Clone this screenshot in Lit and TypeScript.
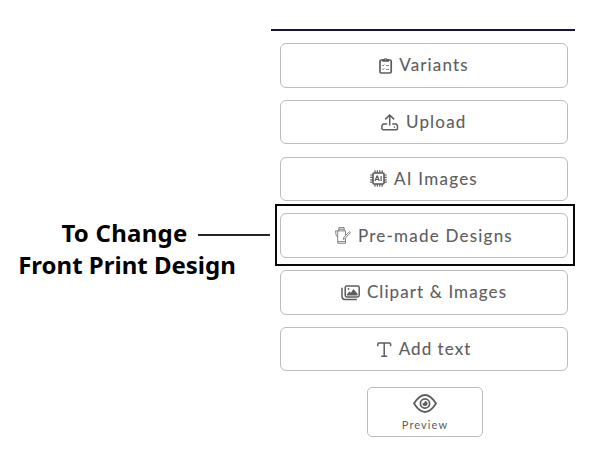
import { LitElement, html, css, svg } from "lit";
import { customElement } from "lit/decorators.js";
import { styleMap } from "lit/directives/style-map.js";

const icons = {
  variants: svg`<rect x="1" y="3" width="11.2" height="13" rx="1.3" fill="none" stroke="currentColor" stroke-width="1.7"/>
    <path d="M3.2 4.8V2.1H5a1.7 1.7 0 0 1 3.2 0H10v2.7z" fill="currentColor"/>
    <circle cx="6.6" cy="2" r=".6" fill="#fff"/>
    <path d="M3.2 8.2l.8.8 1.4-1.6M3.2 12l.8.8 1.4-1.6M7 8.6h3M7 12.4h3" fill="none" stroke="currentColor" stroke-width=".8"/>`,
  upload: svg`<g fill="none" stroke="currentColor" stroke-width="1.5"><path d="M8.7 11.5V1.2M4.3 5.4l4.4-4.4L13.1 5.4"/>
    <path d="M6.2 10H2.4Q.9 10.6.9 12.4v2.2q0 1.2 1.2 1.2h13.2q1.2 0 1.2-1.2v-2.2Q16.5 10.6 15 10H11.2"/></g><circle cx="13.4" cy="13.1" r=".8" fill="currentColor"/>`,
  ai: svg`<rect x="3" y="3" width="11" height="11" rx="1" fill="none" stroke="currentColor" stroke-width="1.6"/>
    <path d="M5 .2v3M7.4 .2v3M9.8 .2v3M12.2 .2v3M5 13.8v3M7.4 13.8v3M9.8 13.8v3M12.2 13.8v3M.2 5h3M.2 7.4h3M.2 9.8h3M.2 12.2h3M13.8 5h3M13.8 7.4h3M13.8 9.8h3M13.8 12.2h3" stroke="currentColor" stroke-width="1.2"/>
    <path d="M5 11l1.9-5h.5l1.9 5M5.8 9.5h2.8M11.1 6v5" fill="none" stroke="currentColor" stroke-width="1.2"/>`,
  designs: svg`<g fill="none" stroke="currentColor" stroke-width=".75"><path d="M.5 3.9h10M2.7 3.9v12.4h7.8v-4.8M10.5 3.9v4.4M3.8 3.9V.6h5.4v3.3M3.8 2.2h5.4M.5 3.9l.7 4.8 1.5 1M2.7 14.6h7.8M8.2 12.4l.6-2L14.4 4.7l1 .9-5.2 5.8z"/></g>`,
  clipart: svg`<g fill="none" stroke="currentColor" stroke-width="1.5"><rect x="4.2" y=".9" width="14" height="11" rx="1.6"/><path d="M1 2.8v8.8q0 2.9 2.7 2.9h12.1"/></g>
    <path d="M5.8 10.4V9.5l2.6-3 1.5 1.3 2.6-3.8 4 4.8v1.6z" fill="currentColor"/><circle cx="7.5" cy="3.9" r=".9" fill="currentColor"/>`,
  text: svg`<path d="M.8 4.2V1.9q0-1 1-1h10.8q1 0 1 1v2.3M7.2 1v13.2M4.2 14.2h6" fill="none" stroke="currentColor" stroke-width="1.5"/>`,
  eye: svg`<path d="M1 9.5Q12 -7.5 23 9.5Q12 26.5 1 9.5z" fill="none" stroke="currentColor" stroke-width="1.8" stroke-linejoin="round"/>
    <circle cx="12" cy="9.5" r="4.6" fill="none" stroke="currentColor" stroke-width="1.7"/><path d="M12 7a2.5 2.5 0 1 1-2.5 2.5q2.3-.1 2.5-2.5z" fill="currentColor"/>`,
};

interface Item {
  label: string;
  icon: unknown;
  w: number;
  h: number;
  gap: number;
  spacing: number;
}

const items: Item[] = [
  { label: "Variants", icon: icons.variants, w: 14, h: 17, gap: 6, spacing: 1.15 },
  { label: "Upload", icon: icons.upload, w: 18, h: 17, gap: 6.5, spacing: 1.2 },
  { label: "AI Images", icon: icons.ai, w: 17, h: 17, gap: 7, spacing: 1.25 },
  { label: "Pre-made Designs", icon: icons.designs, w: 16, h: 17, gap: 7, spacing: 1.22 },
  { label: "Clipart & Images", icon: icons.clipart, w: 19, h: 15, gap: 7, spacing: 1.1 },
  { label: "Add text", icon: icons.text, w: 15, h: 15, gap: 7, spacing: 1.05 },
];

@customElement("app-root")
export class AppRoot extends LitElement {
  static styles = css`
    :host { display: flex; width: 592px; height: 458px; background: #fff; overflow: hidden; box-sizing: border-box; }
    .note { width: 254px; margin-top: 217px; height: 64px; text-align: center; position: relative; color: #000;
      font: 700 24px/32px "Noto Sans", sans-serif; }
    .line { display: block; white-space: nowrap; }
    .first { letter-spacing: 0.25px; padding-right: 5px; }
    .second { letter-spacing: 0; }
    .pointer { position: absolute; left: 198px; top: 17px; width: 72px; height: 2px; background: #252820; }
    .panel { margin: 29px 0 0 17px; width: 304px; display: flex; flex-direction: column; align-items: center; color: #5d5d5d;
      font: 400 17px/20px Lato, sans-serif; -webkit-text-stroke: 0.1px #5d5d5d; }
    .rule { width: 100%; height: 2px; background: #17153f; margin-bottom: 12px; flex: none; }
    .list { display: flex; flex-direction: column; gap: 12.3px; margin-left: 2px; }
    .btn { position: relative; box-sizing: border-box; width: 288px; height: 44.5px; border: 1.4px solid #bcbcbc; border-radius: 6px;
      display: flex; align-items: center; justify-content: center; }
    .active::before { content: ""; position: absolute; left: -6px; top: -10px; width: 296px; height: 58px; border: 2px solid #080808; }
    .label { white-space: nowrap; }
    svg { display: block; flex: none; overflow: visible; }
    .preview { box-sizing: border-box; width: 116px; height: 50px; margin: 16px 0 0 4px; border: 1.4px solid #bcbcbc; border-radius: 5px;
      display: flex; flex-direction: column; align-items: center; padding-top: 6px; }
    .small { font-size: 11px; line-height: 14px; letter-spacing: 1.1px; margin-top: 5px; -webkit-text-stroke: 0; }
  `;

  render() {
    return html`
      <div class="note">
        <span class="line first">To Change</span>
        <span class="line second">Front Print Design</span>
        <div class="pointer"></div>
      </div>
      <div class="panel">
        <div class="rule"></div>
        <div class="list">
          ${items.map(
            (i) => html`<div class="btn ${i.label.startsWith("Pre") ? "active" : ""}" style=${styleMap({ gap: `${i.gap}px` })}>
              <svg width=${i.w} height=${i.h} viewBox="0 0 ${i.w} ${i.h}">${i.icon}</svg>
              <span class="label" style=${styleMap({ letterSpacing: `${i.spacing}px` })}>${i.label}</span>
            </div>`
          )}
        </div>
        <div class="preview">
          <svg width="24" height="19" viewBox="0 0 24 19">${icons.eye}</svg>
          <span class="small">Preview</span>
        </div>
      </div>
    `;
  }
}
